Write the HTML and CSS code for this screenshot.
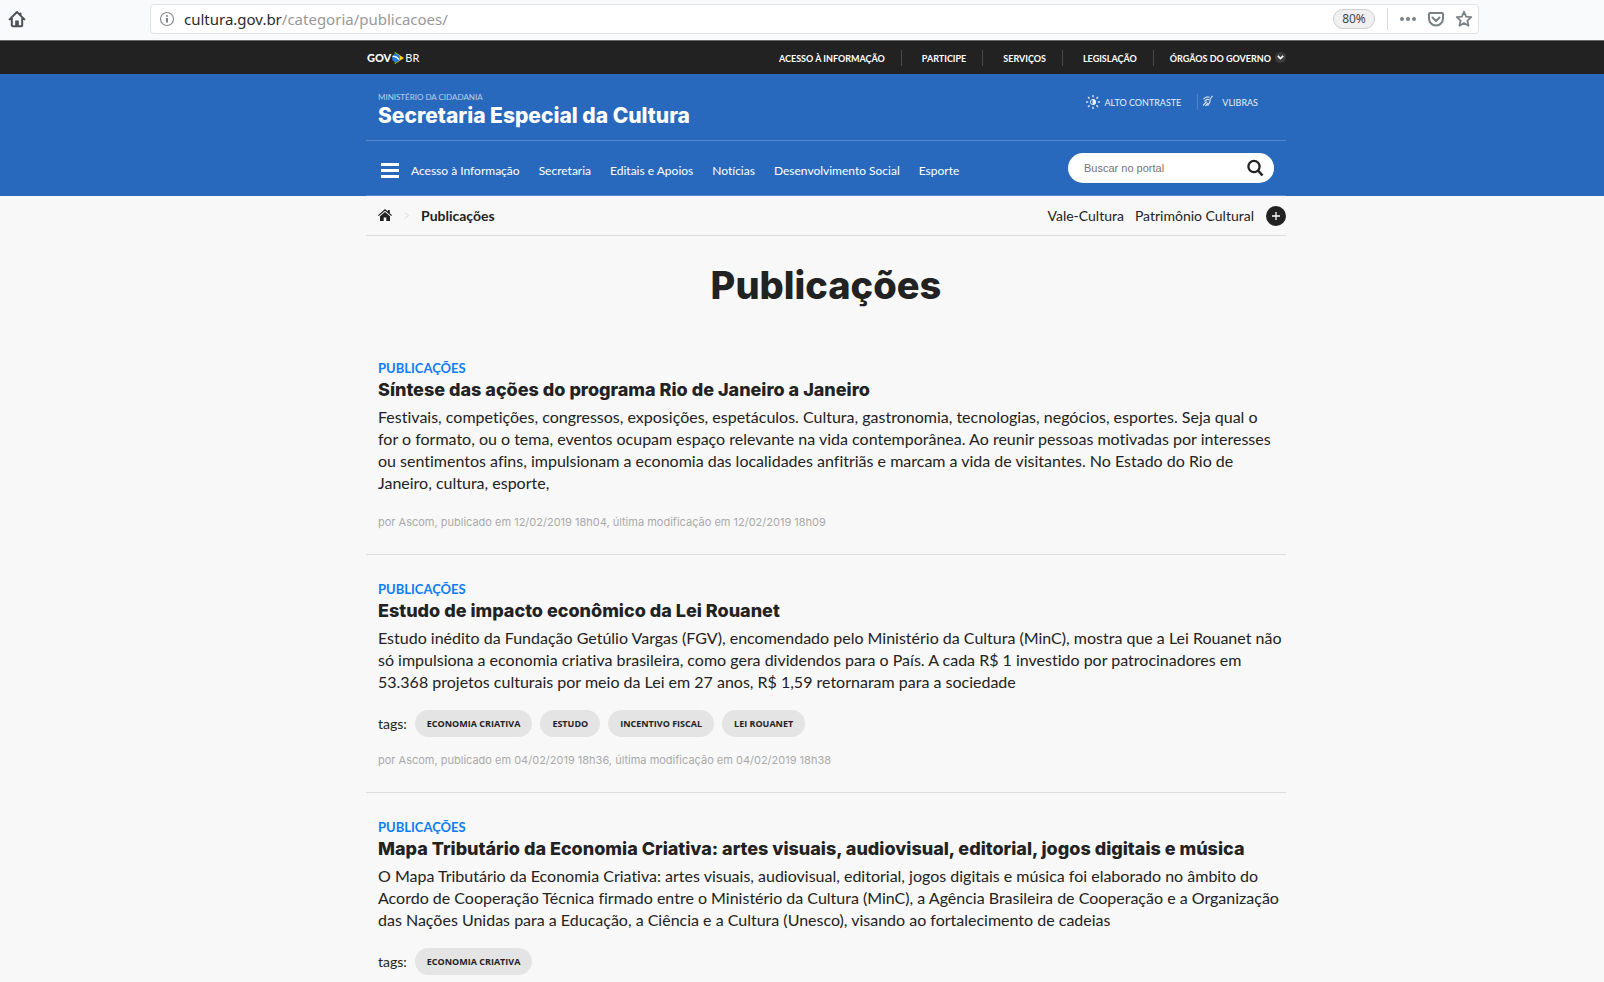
FILE: index.html
```html
<!DOCTYPE html>
<html lang="pt-BR">
<head>
<meta charset="utf-8">
<title>Publicações - Secretaria Especial da Cultura</title>
<link rel="stylesheet" href="styles.css">
</head>
<body>
<div class="browser">
  <button class="browser-btn" aria-label="Página inicial">
    <svg width="18" height="18" viewBox="0 0 18 18"><path d="M1.600 9.400L9 2l7.400 7.400M3.800 8v7.200a1 1 0 0 0 1 1h8.400a1 1 0 0 0 1-1V8M12.500 3.500v2" fill="none" stroke="#4a5257" stroke-width="2" stroke-linecap="round" stroke-linejoin="round"/><path d="M7.200 16v-5.500h3.600V16z" fill="#4a5257"/></svg>
  </button>
  <div class="urlbar">
    <svg class="info" width="16" height="16" viewBox="0 0 16 16"><circle cx="8" cy="8" r="6.500" fill="none" stroke="#8a8d90" stroke-width="1.200"/><path d="M8 7v4.500M8 4.200v1.600" stroke="#6f7377" stroke-width="1.800"/></svg>
    <p class="url">cultura.gov.br<span class="url-path">/categoria/publicacoes/</span></p>
    <button class="zoom">80%</button>
    <div class="url-actions">
      <button class="browser-btn" aria-label="Ações da página"><svg width="18" height="18" viewBox="0 0 18 18" fill="#7a8185"><circle cx="3" cy="9" r="2"/><circle cx="9" cy="9" r="2"/><circle cx="15" cy="9" r="2"/></svg></button>
      <button class="browser-btn" aria-label="Salvar no Pocket"><svg width="18" height="18" viewBox="0 0 18 18" fill="none" stroke="#7a8185" stroke-width="2" stroke-linecap="round" stroke-linejoin="round"><path d="M3 3h12a1 1 0 0 1 1 1v4.500a7 7 0 0 1-14 0V4a1 1 0 0 1 1-1z"/><path d="M5.500 7.500L9 11l3.500-3.500"/></svg></button>
      <button class="browser-btn" aria-label="Adicionar aos favoritos"><svg width="18" height="18" viewBox="0 0 18 18" fill="none" stroke="#7a8185" stroke-width="1.800" stroke-linejoin="round"><path d="M9 1.800l2.100 4.800 5.200.5-3.900 3.500 1.100 5.200L9 13.100l-4.500 2.700 1.100-5.200-3.900-3.500 5.200-.5z"/></svg></button>
    </div>
  </div>
</div>

<div class="govbar">
  <div class="container govbar-row">
    <a class="gov-logo" href="#" aria-label="GOV.BR">
      <b>GOV</b>
      <svg width="12" height="12" viewBox="0 0 12 12"><path d="M3 0l9 6-9 6z" fill="#ffd400"/><path d="M2.500 0L5.500 2 2.500 3zM2.500 12L5.500 10 2.500 9z" fill="#3a9b35"/><circle cx="4" cy="6" r="3.900" fill="#1f7be0"/><path d="M.5 4.500q4-.5 6.500 3" fill="none" stroke="#fff" stroke-width="1.300"/></svg>
      <span>BR</span>
    </a>
    <nav class="gov-links">
      <a href="#">ACESSO À INFORMAÇÃO</a>
      <a href="#">PARTICIPE</a>
      <a href="#">SERVIÇOS</a>
      <a href="#">LEGISLAÇÃO</a>
      <a class="orgs" href="#">ÓRGÃOS DO GOVERNO <svg width="11" height="11" viewBox="0 0 11 11"><circle cx="5.500" cy="5.500" r="5.500" fill="#3c3c3c"/><path d="M2.800 3.800l2.700 2.700 2.700-2.700" fill="none" stroke="#fff" stroke-width="1.700"/></svg></a>
    </nav>
  </div>
</div>

<header class="header">
  <div class="container">
    <div class="header-top">
      <a class="brand" href="#">
        <span class="brand-sub">MINISTÉRIO DA CIDADANIA</span>
        <span class="brand-name">Secretaria Especial da Cultura</span>
      </a>
      <div class="access">
        <a class="contrast" href="#"><svg width="14" height="14" viewBox="0 0 14 14" stroke="#fff" stroke-opacity=".85"><g stroke-width="1.500"><path d="M7 0v2.200M7 11.800V14M0 7h2.200M11.800 7H14M2 2l1.600 1.600M10.400 10.400L12 12M2 12l1.600-1.600M10.400 3.600L12 2"/></g><circle cx="7" cy="7" r="2.600" fill="none"/><path d="M7 4.400a2.600 2.600 0 0 1 0 5.200z" fill="#fff"/></svg>ALTO CONTRASTE</a>
        <a class="vlibras" href="#"><svg width="12" height="14" viewBox="0 0 12 14" fill="none" stroke="#fff" stroke-opacity=".85" stroke-width="1.200"><path d="M1.500 4.200Q4 1 7.500 2.200M2.500 6.500Q4.500 3.500 7 4.600M10.500.800L7.800 4.500M8 4.500Q8.500 7 7 8.500T6 11M1 10.500L4.800 6.500M3.500 11L6 8"/></svg>VLIBRAS</a>
      </div>
    </div>
    <div class="header-nav">
      <button class="burger" aria-label="Menu"><span></span><span></span><span></span></button>
      <nav class="menu">
        <a href="#">Acesso à Informação</a>
        <a href="#">Secretaria</a>
        <a href="#">Editais e Apoios</a>
        <a href="#">Notícias</a>
        <a href="#">Desenvolvimento Social</a>
        <a href="#">Esporte</a>
      </nav>
      <form class="search">
        <input type="text" placeholder="Buscar no portal" aria-label="Buscar no portal">
        <button type="button" aria-label="Buscar"><svg width="18" height="18" viewBox="0 0 18 18" fill="none" stroke="#222"><circle cx="8" cy="7.500" r="5.600" stroke-width="2.300"/><path d="M12 11.500l4.500 5" stroke-width="2.600"/></svg></button>
      </form>
    </div>
  </div>
</header>

<main class="container">
  <div class="crumbs">
    <a class="home" href="#" aria-label="Início"><svg width="14" height="14" viewBox="0 0 14 14" fill="#222"><path d="M7 0l3 2.600V1h1.800v3.200L14 6.200l-.8.9L7 1.800.8 7.100 0 6.200z"/><path d="M7 3l5 4.300V12H8.300V8.500H5.700V12H2V7.300z"/></svg></a>
    <svg class="sep" width="5" height="7" viewBox="0 0 5 7"><path d="M.5.500l4 3-4 3" fill="none" stroke="#ddd"/></svg>
    <b class="here">Publicações</b>
    <nav class="featured">
      <a href="#">Vale-Cultura</a>
      <a href="#">Patrimônio Cultural</a>
    </nav>
    <button class="plus" aria-label="Mais"><svg width="20" height="20" viewBox="0 0 20 20"><path d="M10 6v8M6 10h8" stroke="#fff" stroke-width="1.300"/></svg></button>
  </div>

  <h1 class="page-title">Publicações</h1>

  <article class="post">
    <a class="category" href="#">PUBLICAÇÕES</a>
    <h2><a href="#">Síntese das ações do programa Rio de Janeiro a Janeiro</a></h2>
    <p class="excerpt">Festivais, competições, congressos, exposições, espetáculos. Cultura, gastronomia, tecnologias, negócios, esportes. Seja qual o<br>for o formato, ou o tema, eventos ocupam espaço relevante na vida contemporânea. Ao reunir pessoas motivadas por interesses<br>ou sentimentos afins, impulsionam a economia das localidades anfitriãs e marcam a vida de visitantes. No Estado do Rio de<br>Janeiro, cultura, esporte,</p>
    <p class="meta">por Ascom, publicado em 12/02/2019 18h04, última modificação em 12/02/2019 18h09</p>
  </article>

  <article class="post">
    <a class="category" href="#">PUBLICAÇÕES</a>
    <h2><a href="#">Estudo de impacto econômico da Lei Rouanet</a></h2>
    <p class="excerpt">Estudo inédito da Fundação Getúlio Vargas (FGV), encomendado pelo Ministério da Cultura (MinC), mostra que a Lei Rouanet não<br>só impulsiona a economia criativa brasileira, como gera dividendos para o País. A cada R$ 1 investido por patrocinadores em<br>53.368 projetos culturais por meio da Lei em 27 anos, R$ 1,59 retornaram para a sociedade</p>
    <div class="tags"><span class="tags-label">tags:</span><a href="#">ECONOMIA CRIATIVA</a><a href="#">ESTUDO</a><a href="#">INCENTIVO FISCAL</a><a href="#">LEI ROUANET</a></div>
    <p class="meta">por Ascom, publicado em 04/02/2019 18h36, última modificação em 04/02/2019 18h38</p>
  </article>

  <article class="post">
    <a class="category" href="#">PUBLICAÇÕES</a>
    <h2><a href="#">Mapa Tributário da Economia Criativa: artes visuais, audiovisual, editorial, jogos digitais e música</a></h2>
    <p class="excerpt">O Mapa Tributário da Economia Criativa: artes visuais, audiovisual, editorial, jogos digitais e música foi elaborado no âmbito do<br>Acordo de Cooperação Técnica firmado entre o Ministério da Cultura (MinC), a Agência Brasileira de Cooperação e a Organização<br>das Nações Unidas para a Educação, a Ciência e a Cultura (Unesco), visando ao fortalecimento de cadeias</p>
    <div class="tags"><span class="tags-label">tags:</span><a href="#">ECONOMIA CRIATIVA</a></div>
  </article>
</main>
</body>
</html>
```

FILE: styles.css
```css
* { box-sizing: border-box; }

body {
  margin: 0;
  background: #f8f8f8;
  color: #222;
  font-family: Lato, "Open Sans", sans-serif;
  font-size: 16px;
  font-variant-ligatures: none;
}

a { color: inherit; text-decoration: none; }
p, h1, h2 { margin: 0; }
button { border: 0; padding: 0; background: none; font: inherit; color: inherit; }
svg { display: block; flex: none; }

.container {
  width: 920px;
  max-width: 100%;
  margin-left: max(0px, calc(50% - 436px));
}

/* Browser toolbar */
.browser {
  display: flex;
  align-items: center;
  padding: 4px 125px 6px 8px;
  background: #f9fafc;
  border-bottom: 1px solid #66686a;
}
.urlbar {
  flex: 1;
  display: flex;
  align-items: center;
  height: 30px;
  margin-left: 124px;
  padding: 0 5px 0 8px;
  background: #fff;
  border: 1px solid #e1e2e5;
  border-radius: 4px;
}
.url {
  flex: 1;
  margin-left: 9px;
  font: 15px/22px "Noto Sans", sans-serif;
  color: #2a2a2e;
}
.url-path { color: #97989b; }
.zoom {
  width: 42px;
  height: 20px;
  border: 1px solid #cfcfd1;
  border-radius: 10px;
  background: #f0f0f1;
  font: 12px/18px "Noto Sans", sans-serif;
  color: #45484b;
}
.url-actions {
  display: flex;
  align-items: center;
  gap: 10px;
  height: 22px;
  margin-left: 12px;
  padding-left: 11px;
  border-left: 1px solid #dcdcde;
}

/* Government bar */
.govbar { background: #222; color: #fff; }
.govbar-row {
  display: flex;
  align-items: center;
  justify-content: space-between;
  height: 33px;
}
.gov-logo {
  display: flex;
  align-items: center;
  gap: 1px;
  padding-left: 1px;
  font-size: 11px;
  line-height: 12px;
}
.gov-logo b { font-weight: 900; }
.gov-links { display: flex; height: 16px; font-size: 9px; font-weight: 700; line-height: 18px; }
.gov-links a { padding: 0 16px 0 20px; border-right: 1px solid #4a4a4a; }
.gov-links .orgs {
  display: flex;
  gap: 4px;
  padding: 0 0 0 16px;
  border: 0;
}
.orgs svg { margin-top: 2px; }

/* Blue header */
.header { background: #2869bd; color: #fff; }
.header-top {
  display: flex;
  justify-content: space-between;
  height: 67px;
  padding: 18px 28px 0 12px;
  border-bottom: 1px solid #5588cb;
}
.brand { display: flex; flex-direction: column; gap: 2px; }
.brand-sub { font-size: 8px; line-height: 10px; opacity: .65; }
.brand-name { font: 800 21px/24px Inter, sans-serif; }
.access { display: flex; align-items: center; height: 16px; margin-top: 2px; font-size: 9px; opacity: .9; }
.contrast { display: flex; align-items: center; gap: 5px; padding-right: 16px; }
.vlibras {
  display: flex;
  align-items: center;
  gap: 8px;
  height: 16px;
  padding-left: 4px;
  border-left: 1px solid #5588cb;
}
.header-nav {
  display: flex;
  align-items: center;
  height: 55px;
  padding: 0 12px 0 15px;
  border-bottom: 1px solid #5588cb;
}
.burger { display: flex; flex-direction: column; gap: 3px; width: 18px; margin-top: 4px; }
.burger span { height: 3px; background: #fff; }
.menu {
  flex: 1;
  display: flex;
  gap: 19px;
  margin: 6px 0 0 12px;
  font-size: 12px;
  line-height: 16px;
}
.search {
  display: flex;
  align-items: center;
  width: 206px;
  height: 30px;
  padding: 0 10px 0 16px;
  background: #fff;
  border-radius: 15px;
}
.search input {
  flex: 1;
  min-width: 0;
  padding: 0;
  border: 0;
  outline: 0;
  background: none;
  font: 11px "Liberation Sans", sans-serif;
}
.search input::placeholder { color: #757575; }

/* Breadcrumbs */
.crumbs {
  display: flex;
  align-items: center;
  height: 40px;
  padding-left: 12px;
  border-bottom: 1px solid #ddd;
  font-size: 14px;
}
.sep { margin: 0 12px; }
.featured { display: flex; gap: 11px; margin-left: auto; }
.plus { margin-left: 12px; border-radius: 50%; background: #222; }

.page-title {
  padding: 24px 0 43px;
  font: 800 38px/50px Inter, sans-serif;
  text-align: center;
}

/* Posts */
.post {
  padding: 6px 12px 22px;
  border-bottom: 1px solid #ddd;
}
.post + .post { padding-top: 25px; }
.category {
  display: block;
  font-size: 13px;
  font-weight: 700;
  line-height: 19px;
  color: #0d7dfa;
}
.post h2 { font: 800 18px/24px Inter, sans-serif; }
.excerpt { padding-top: 4px; line-height: 22px; white-space: nowrap; }
.tags { display: flex; align-items: center; gap: 8px; margin-top: 17px; }
.tags-label { font-size: 14px; }
.tags a {
  padding: 0 12px;
  border-radius: 14px;
  background: #e4e4e4;
  font: 700 9px/27px "Open Sans", sans-serif;
}
.meta { padding-top: 18px; font: 11px/20px Inter, sans-serif; color: #aaa; }
.tags + .meta { padding-top: 13px; }
```
